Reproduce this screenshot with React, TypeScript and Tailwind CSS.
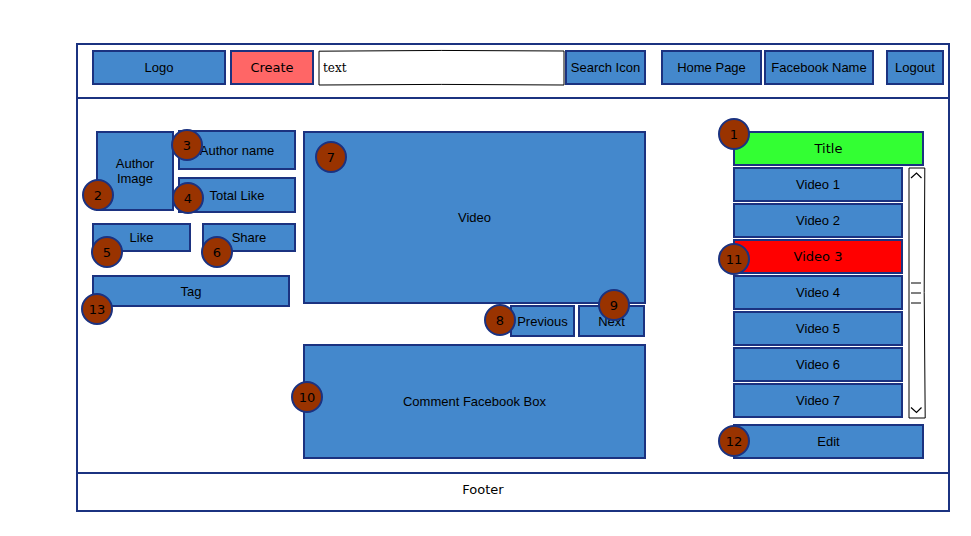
import type { ReactNode } from "react";
import clsx from "clsx";

const box =
  "flex items-center justify-center border-2 border-[#1b3280] bg-[#4488cc] text-center text-[13px] leading-[15px] whitespace-nowrap text-black";
const button = clsx(box, "cursor-pointer");

const videos = [1, 2, 3, 4, 5, 6, 7];

function Badge({ n, className }: { n: number; className: string }) {
  return (
    <span
      className={clsx(
        "absolute z-10 flex size-8 items-center justify-center rounded-full border-2 border-[#1b3280] bg-[#993300] font-['DejaVu_Sans',sans-serif] text-[13px] leading-[15px] text-black",
        className,
      )}
    >
      {n}
    </span>
  );
}

function Marked({ n, at, className, children }: { n: number; at: string; className?: string; children: ReactNode }) {
  return (
    <div className={clsx("relative flex", className)}>
      {children}
      <Badge n={n} className={at} />
    </div>
  );
}

function Header() {
  return (
    <header className="flex h-[54px] items-start border-b-2 border-[#1b3280] pt-[5px] pr-1 pl-[14px]">
      <a href="#logo" className={clsx(box, "h-[35px] w-[134px] shrink-0")}>
        Logo
      </a>
      <button
        type="button"
        className="ml-1 h-[35px] w-[84px] shrink-0 cursor-pointer border-2 border-[#1b3280] bg-[#ff6666] font-['DejaVu_Sans',sans-serif] text-[13px] leading-[15px] text-black"
      >
        Create
      </button>
      <form className="ml-1 flex min-w-0 flex-1" onSubmit={(e) => e.preventDefault()}>
        <div className="relative min-w-0 flex-1">
          <input
            type="text"
            aria-label="Search"
            defaultValue="text"
            className="block h-[35px] w-full bg-transparent px-[5px] font-['DejaVu_Serif',serif] text-[12px] leading-[15px] text-black outline-none"
          />
          <svg
            className="pointer-events-none absolute inset-x-0 top-0 h-[36px] w-full overflow-visible"
            viewBox="0 0 247 36"
            preserveAspectRatio="none"
            fill="none"
            stroke="#000"
            aria-hidden="true"
          >
            <path d="M1 1.2Q123 -.2 246 1L246 35Q123 33.8 1 35Z" />
          </svg>
        </div>
        <button type="submit" className={clsx(button, "h-[35px] w-[81px] shrink-0")}>
          Search Icon
        </button>
      </form>
      <nav className="ml-[15px] flex shrink-0">
        <a href="#home" className={clsx(box, "h-[35px] w-[101px]")}>
          Home Page
        </a>
        <a href="#profile" className={clsx(box, "ml-[2px] h-[35px] w-[110px]")}>
          Facebook Name
        </a>
        <button type="button" className={clsx(button, "ml-3 h-[35px] w-[58px]")}>
          Logout
        </button>
      </nav>
    </header>
  );
}

function AuthorPanel() {
  return (
    <section className="w-[204px] shrink-0">
      <div className="flex items-start gap-1 pl-1">
        <Marked n={2} at="-left-[14px] bottom-0" className="mt-px h-20 w-[78px]">
          <div className={clsx(box, "flex-1")}>
            Author
            <br />
            Image
          </div>
        </Marked>
        <div className="flex flex-1 flex-col gap-[7px]">
          <Marked n={3} at="-left-[7px] -top-px" className="h-10">
            <div className={clsx(box, "flex-1")}>Author name</div>
          </Marked>
          <Marked n={4} at="-left-[6px] top-[5px]" className="h-9">
            <div className={clsx(box, "flex-1")}>Total Like</div>
          </Marked>
        </div>
      </div>
      <div className="mt-[10px] flex justify-between">
        <Marked n={5} at="-left-px top-[13px]" className="h-[29px] w-[99px]">
          <button type="button" className={clsx(button, "flex-1")}>
            Like
          </button>
        </Marked>
        <Marked n={6} at="-left-px top-[13px]" className="h-[29px] w-[94px]">
          <button type="button" className={clsx(button, "flex-1")}>
            Share
          </button>
        </Marked>
      </div>
      <Marked n={13} at="-left-[11px] top-[18px]" className="mt-[23px] mr-[6px] h-8">
        <div className={clsx(box, "flex-1")}>Tag</div>
      </Marked>
    </section>
  );
}

function Player() {
  return (
    <section className="mt-px ml-[7px] min-w-0 flex-1">
      <Marked n={7} at="left-3 top-[10px]" className="h-[173px]">
        <div className={clsx(box, "flex-1")}>Video</div>
      </Marked>
      <div className="mt-px mr-px flex justify-end gap-[3px]">
        <Marked n={8} at="-left-[26px] -top-px" className="h-8 w-[65px]">
          <button type="button" className={clsx(button, "flex-1")}>
            Previous
          </button>
        </Marked>
        <Marked n={9} at="left-5 -top-4" className="h-8 w-[67px]">
          <button type="button" className={clsx(button, "flex-1")}>
            Next
          </button>
        </Marked>
      </div>
      <Marked n={10} at="-left-3 top-[37px]" className="mt-[7px] h-[115px]">
        <div className={clsx(box, "flex-1")}>Comment Facebook Box</div>
      </Marked>
    </section>
  );
}

function ScrollTrack() {
  return (
    <svg className="h-[252px] w-[18px] shrink-0" viewBox="0 0 18 252" fill="none" stroke="#000" aria-hidden="true">
      <path d="M1 1H16.8Q15.4 125 17.2 251H1Z" />
      <path d="M3 11L8.5 6L13.5 11M3 240.5L8.5 245.5L13.5 240.5" strokeWidth="1.2" />
      <path d="M3 116H13M3 126H13M3 136H13" />
    </svg>
  );
}

function Playlist() {
  return (
    <aside className="mt-px ml-[87px] w-[191px] shrink-0">
      <Marked n={1} at="-left-[15px] -top-[13px]" className="h-[35px]">
        <h2 className="flex flex-1 items-center justify-center border-2 border-[#1b3280] bg-[#33ff33] font-['DejaVu_Sans',sans-serif] text-[13px] leading-[15px] text-black">
          Title
        </h2>
      </Marked>
      <div className="mt-px flex gap-[5px]">
        <ul className="flex w-[170px] shrink-0 flex-col gap-px">
          {videos.map((n) => (
            <li key={n} className="relative flex h-[35px]">
              {n === 3 ? (
                <>
                  <button
                    type="button"
                    aria-current="true"
                    className="flex-1 cursor-pointer border-2 border-[#1b3280] bg-[#ff0000] font-['DejaVu_Sans',sans-serif] text-[13px] leading-[15px] text-black"
                  >
                    Video 3
                  </button>
                  <Badge n={11} className="-left-[15px] top-1" />
                </>
              ) : (
                <button type="button" className={clsx(button, "flex-1")}>
                  {`Video ${n}`}
                </button>
              )}
            </li>
          ))}
        </ul>
        <ScrollTrack />
      </div>
      <Marked n={12} at="-left-[15px] top-px" className="mt-[5px] h-[35px]">
        <button type="button" className={clsx(button, "flex-1")}>
          Edit
        </button>
      </Marked>
    </aside>
  );
}

export default function App() {
  return (
    <div className="min-h-screen bg-white pt-[43px] pr-[21px] pb-6 pl-[76px] font-['Liberation_Sans',Arial,sans-serif]">
      <div className="border-2 border-[#1b3280]">
        <Header />
        <main className="flex items-start pt-[31px] pr-6 pb-[13px] pl-[14px]">
          <AuthorPanel />
          <Player />
          <Playlist />
        </main>
        <footer className="border-t-2 border-[#1b3280] pt-2 pr-[60px] pb-[13px] text-center font-['DejaVu_Sans',sans-serif] text-[13px] leading-[15px] text-black">
          Footer
        </footer>
      </div>
    </div>
  );
}
